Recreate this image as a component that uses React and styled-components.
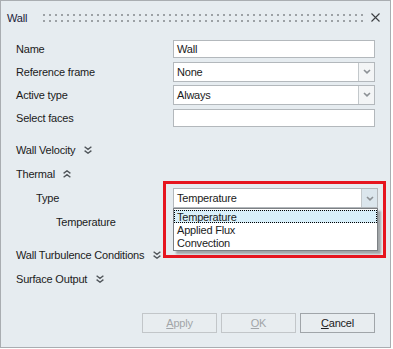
import React from 'react';
import styled, { createGlobalStyle, css } from 'styled-components';

const GlobalStyle = createGlobalStyle`
  body {
    margin: 0;
    background: #ffffff;
    font-family: "Liberation Sans", Arial, sans-serif;
  }
`;

const Dialog = styled.div`
  position: relative;
  width: 391px;
  height: 348px;
  box-sizing: border-box;
  border: 1px solid #a9adb1;
  background: #e6ecf0;
  display: flex;
  flex-direction: column;
  font-size: 11px;
  letter-spacing: -0.2px;
  color: #1b1b1b;
`;

const TitleBar = styled.div`
  display: flex;
  align-items: center;
  height: 33px;
  padding: 0 10px 0 6px;
`;

const Title = styled.span`
  color: #1c1c3a;
`;

const Grip = styled.div`
  flex: 1;
  height: 8px;
  margin: 0 8px 0 16px;
  background-image:
    linear-gradient(to right, #9ca1a5 2px, transparent 2px),
    linear-gradient(to right, #9ca1a5 2px, transparent 2px);
  background-size: 6px 2px;
  background-repeat: repeat-x;
  background-position: 0 0, 0 6px;
`;

const Form = styled.div`
  display: flex;
  flex-direction: column;
  padding: 3px 15px 0 15px;
`;

const Row = styled.div`
  display: flex;
  align-items: center;
  height: ${p => p.$h || 23}px;
  margin-top: ${p => p.$mt || 0}px;
  padding-left: ${p => p.$indent || 0}px;
`;

const Label = styled.span`
  flex: 1;
  display: flex;
  align-items: center;
`;

const Chevron = styled.svg`
  margin-left: ${p => p.$gap || 9}px;
`;

const TextInput = styled.div`
  width: 202px;
  height: 18px;
  box-sizing: border-box;
  border: 1px solid #b3b8bc;
  background: #ffffff;
  padding-left: 3px;
  display: flex;
  align-items: center;
`;

const ComboWrap = styled.div`
  position: relative;
  margin-right: -3px;
`;

const Combo = styled.div`
  display: flex;
  width: ${p => p.$w || 202}px;
  height: 20px;
  box-sizing: border-box;
  border: 1px solid #b3b8bc;
  background: #ffffff;
`;

const ComboText = styled.div`
  flex: 1;
  display: flex;
  align-items: center;
  padding-left: 3px;
`;

const ComboButton = styled.div`
  width: 16px;
  box-sizing: border-box;
  border-left: 1px solid #c3c8cb;
  background: ${p => (p.$pressed ? '#dbe6ed' : '#f3f5f6')};
  display: flex;
  align-items: center;
  justify-content: center;
`;

const List = styled.ul`
  position: absolute;
  top: 100%;
  left: 0;
  width: 205px;
  box-sizing: border-box;
  margin: 0;
  padding: 1px 0;
  list-style: none;
  background: #ffffff;
  border: 1px solid #7c8084;
  box-shadow: 3px 3px 2px rgba(0, 0, 0, 0.3);
  z-index: 2;
`;

const Option = styled.li`
  height: 13px;
  line-height: 12px;
  box-sizing: border-box;
  padding-left: 2px;
  border: 1px solid transparent;
  ${p => p.$active && css`
    background: #d8effa;
    border: 1px dotted #000000;
  `}
`;

const Spacer = styled.div`
  flex: 1;
`;

const Footer = styled.div`
  display: flex;
  justify-content: flex-end;
  gap: 4px;
  padding: 0 15px 14px 0;
`;

const Button = styled.button`
  width: 75px;
  height: 20px;
  padding: 0;
  border: 1px solid ${p => (p.disabled ? '#c2c6c9' : '#a0a5a9')};
  background: #e8edf0;
  color: ${p => (p.disabled ? '#a2a5a8' : '#1b1b1b')};
  font: inherit;
  letter-spacing: inherit;
`;

const Highlight = styled.div`
  position: absolute;
  left: 162px;
  top: 180px;
  width: 223px;
  height: 77px;
  box-sizing: border-box;
  border: 3px solid #e6151f;
  pointer-events: none;
  z-index: 3;
`;

const DownArrow = () => (
  <svg width="8" height="5" viewBox="0 0 8 5">
    <path d="M1 1 L4 3.8 L7 1" stroke="#8c9195" strokeWidth="1.6" fill="none" />
  </svg>
);

const DoubleDown = () => (
  <Chevron width="8" height="8" viewBox="0 0 8 8">
    <path d="M0.6 0.8 L4 3.4 L7.4 0.8 M0.6 4.6 L4 7.2 L7.4 4.6" stroke="#50555a" strokeWidth="1.35" fill="none" />
  </Chevron>
);

const DoubleUp = () => (
  <Chevron $gap={8} width="8" height="8" viewBox="0 0 8 8">
    <path d="M0.6 3.4 L4 0.8 L7.4 3.4 M0.6 7.2 L4 4.6 L7.4 7.2" stroke="#50555a" strokeWidth="1.35" fill="none" />
  </Chevron>
);

const CloseIcon = () => (
  <svg width="9" height="9" viewBox="0 0 9 9">
    <path d="M0.5 0.5 L8.5 8.5 M8.5 0.5 L0.5 8.5" stroke="#3c3f42" strokeWidth="1.1" fill="none" />
  </svg>
);

const Select = ({ value, pressed, width }) => (
  <Combo $w={width}>
    <ComboText>{value}</ComboText>
    <ComboButton $pressed={pressed}>
      <DownArrow />
    </ComboButton>
  </Combo>
);

export default function App() {
  return (
    <>
      <GlobalStyle />
      <Dialog>
        <TitleBar>
          <Title>Wall</Title>
          <Grip />
          <CloseIcon />
        </TitleBar>

        <Form>
          <Row>
            <Label>Name</Label>
            <TextInput>Wall</TextInput>
          </Row>
          <Row>
            <Label>Reference frame</Label>
            <Select value="None" />
          </Row>
          <Row>
            <Label>Active type</Label>
            <Select value="Always" />
          </Row>
          <Row>
            <Label>Select faces</Label>
            <TextInput />
          </Row>

          <Row $h={24} $mt={9}>
            <Label>Wall Velocity<DoubleDown /></Label>
          </Row>
          <Row $h={24}>
            <Label>Thermal<DoubleUp /></Label>
          </Row>
          <Row $h={24} $indent={20}>
            <Label>Type</Label>
            <ComboWrap>
              <Select value="Temperature" pressed width={205} />
              <List>
                <Option $active>Temperature</Option>
                <Option>Applied Flux</Option>
                <Option>Convection</Option>
              </List>
            </ComboWrap>
          </Row>
          <Row $indent={40}>
            <Label>Temperature</Label>
            <TextInput />
          </Row>
          <Row $h={24} $mt={10}>
            <Label>Wall Turbulence Conditions<DoubleDown /></Label>
          </Row>
          <Row $h={24}>
            <Label>Surface Output<DoubleDown /></Label>
          </Row>
        </Form>

        <Spacer />

        <Footer>
          <Button disabled><u>A</u>pply</Button>
          <Button disabled><u>O</u>K</Button>
          <Button><u>C</u>ancel</Button>
        </Footer>

        <Highlight />
      </Dialog>
    </>
  );
}
